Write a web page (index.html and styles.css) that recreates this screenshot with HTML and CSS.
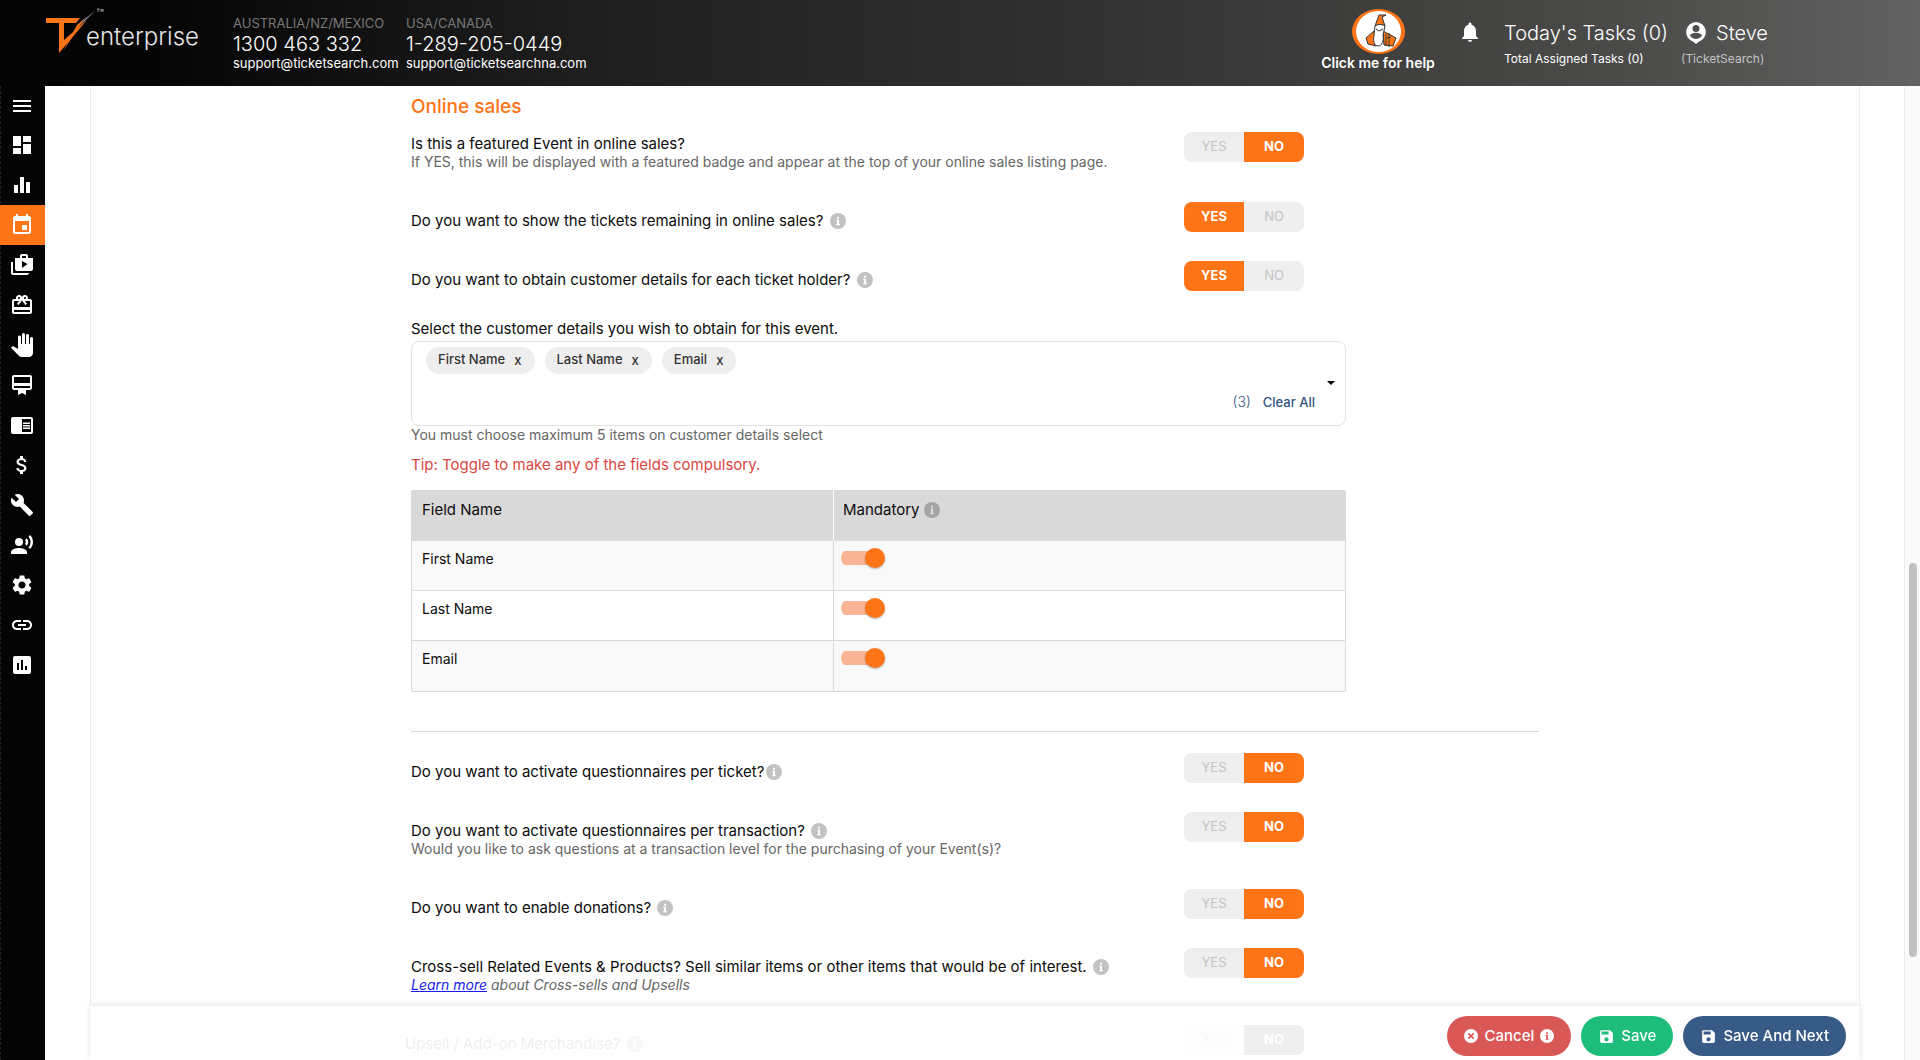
FILE: index.html
```html
<!DOCTYPE html>
<html lang="en">
<head>
<meta charset="utf-8">
<title>Event settings - Online sales</title>
<link rel="stylesheet" href="styles.css">
</head>
<body>
<svg class="sprite" aria-hidden="true">
  <symbol id="info" viewBox="0 0 24 24"><circle class="disc" cx="12" cy="12" r="12"/><path class="mark" d="M10.600 5.500h3v3h-3zM9.500 10h4v6.500h1.300v2H9.300v-2h1.300V12H9.500z"/></symbol>
  <symbol id="save" viewBox="0 0 24 24"><path d="M17 3H5a2 2 0 0 0-2 2v14a2 2 0 0 0 2 2h14a2 2 0 0 0 2-2V7l-4-4zm-5 16a3 3 0 1 1 0-6 3 3 0 0 1 0 6zm3-10H5V5h10v4z"/></symbol>
</svg>

<header class="topbar">
  <a class="logo" href="#" aria-label="enterprise home">
    <svg class="logo-mark" viewBox="0 0 58 48" aria-hidden="true">
      <path fill="#ff7417" d="M0 10h34l-4 5H18v17L41 12 13 45V15H0z"/>
      <path fill="#ff7417" d="M31 17l8-7-22 33z"/>
      <path fill="#777" d="M37 12L49 3 34 18z"/>
      <path stroke="#888" fill="none" d="M51 1h3M52 1v3M55 4V1l1 2 1-2v3"/>
    </svg>
    <span class="logo-name">enterprise</span>
  </a>
  <address class="contact">
    <span class="region">AUSTRALIA/NZ/MEXICO</span>
    <span class="phone">1300 463 332</span>
    <span class="mail">support@ticketsearch.com</span>
  </address>
  <address class="contact">
    <span class="region">USA/CANADA</span>
    <span class="phone">1-289-205-0449</span>
    <span class="mail">support@ticketsearchna.com</span>
  </address>
  <button class="help" type="button">
    <svg class="gnome" viewBox="0 0 53 45" aria-hidden="true">
      <ellipse cx="26.500" cy="22.500" rx="26.500" ry="22.500" fill="#ff7417"/>
      <ellipse cx="26.500" cy="22.500" rx="22.500" ry="20.500" fill="#fff"/>
      <path d="M22 22l-8 7 2 6 8 2zM31 22l13 7-3 8-9-1z" fill="#ff7417" stroke="#333"/>
      <path d="M23 17l4-11h7l-4 2 3 9c-3-2-6-2-10 0z" fill="#ff7417" stroke="#333"/>
      <path d="M23 17l-1 9c-1 6 0 11 4 11s6-5 5-11l2-9c-3-2-7-2-10 0zM24 20l3 2 4-2M34 25v12M37 24v14M39 28l-4 1" fill="#fff" stroke="#333"/>
    </svg>
    <span>Click me for help</span>
  </button>
  <button class="bell" type="button" aria-label="Notifications">
    <svg class="icon" viewBox="0 0 24 24"><path d="M12 22c1.100 0 2-.9 2-2h-4c0 1.100.9 2 2 2zm6-6v-5c0-3.070-1.640-5.640-4.500-6.320V4c0-.83-.67-1.500-1.500-1.500s-1.500.67-1.500 1.500v.68C7.630 5.360 6 7.920 6 11v5l-2 2v1h16v-1l-2-2z"/></svg>
  </button>
  <div class="tasks">
    <span class="big">Today's Tasks (0)</span>
    <span class="small">Total Assigned Tasks (0)</span>
  </div>
  <div class="user">
    <span class="big"><svg class="icon" viewBox="0 0 24 24" aria-hidden="true"><path fill-rule="evenodd" d="M12 1a10 10 0 0 0-3 19.500L12 23l3-2.500A10 10 0 0 0 12 1zm0 3a3.500 3.500 0 1 1 0 7 3.500 3.500 0 0 1 0-7zm0 14c-2.500 0-4.700-1.300-6-3.200 0-2 4-3.100 6-3.100s6 1.100 6 3.100c-1.300 1.900-3.500 3.200-6 3.200z"/></svg>Steve</span>
    <span class="small account">(TicketSearch)</span>
  </div>
</header>

<div class="body">
  <nav class="sidebar" aria-label="Main">
    <a href="#" aria-label="Menu"><svg class="icon" viewBox="0 0 24 24"><path d="M3 18h18v-2H3v2zm0-5h18v-2H3v2zm0-7v2h18V6H3z"/></svg></a>
    <a href="#" aria-label="Dashboard"><svg class="icon" viewBox="0 0 24 24"><path d="M3 13h8V3H3v10zm0 8h8v-6H3v6zm10 0h8V11h-8v10zm0-18v6h8V3h-8z"/></svg></a>
    <a href="#" aria-label="Statistics"><svg class="icon" viewBox="0 0 24 24"><path d="M10 20h4V4h-4v16zm-6 0h4v-8H4v8zM16 9v11h4V9h-4z"/></svg></a>
    <a href="#" class="active" aria-label="Events"><svg class="icon" viewBox="0 0 24 24"><path d="M17 12h-5v5h5v-5zM16 1v2H8V1H6v2H5c-1.110 0-1.990.9-1.990 2L3 19c0 1.100.89 2 2 2h14c1.100 0 2-.9 2-2V5c0-1.100-.9-2-2-2h-1V1h-2zm3 18H5V8h14v11z"/></svg></a>
    <a href="#" aria-label="Packages"><svg class="icon" viewBox="0 0 24 24"><path d="M3 9H1v11c0 1.110.89 2 2 2h14c1.110 0 2-.89 2-2H3V9zm15-4V3c0-1.110-.89-2-2-2h-4c-1.110 0-2 .89-2 2v2H5v11c0 1.110.89 2 2 2h14c1.110 0 2-.89 2-2V5h-5zm-6-2h4v2h-4V3zm0 12V8l5.500 3-5.500 4z"/></svg></a>
    <a href="#" aria-label="Gift cards"><svg class="icon" viewBox="0 0 24 24"><path d="M20 6h-2.180c.11-.31.18-.65.18-1 0-1.660-1.340-3-3-3-1.050 0-1.960.54-2.500 1.350l-.5.67-.5-.68C10.960 2.540 10.050 2 9 2 7.340 2 6 3.340 6 5c0 .35.07.69.18 1H4c-1.110 0-1.990.89-1.990 2L2 19c0 1.110.89 2 2 2h16c1.110 0 2-.89 2-2V8c0-1.110-.89-2-2-2zm-5-2c.55 0 1 .45 1 1s-.45 1-1 1-1-.45-1-1 .45-1 1-1zM9 4c.55 0 1 .45 1 1s-.45 1-1 1-1-.45-1-1 .45-1 1-1zm11 15H4v-2h16v2zm0-5H4V8h5.080L7 10.830 8.620 12 11 8.760l1-1.360 1 1.360L15.380 12 17 10.830 14.920 8H20v6z"/></svg></a>
    <a href="#" aria-label="Holds"><svg class="icon" viewBox="0 0 24 24"><path d="M23 5.500V20c0 2.200-1.800 4-4 4h-7.300c-1.080 0-2.100-.43-2.850-1.190L1 14.830s1.260-1.230 1.300-1.250c.22-.19.49-.29.79-.29.22 0 .42.06.6.16.04.01 4.310 2.460 4.310 2.460V4c0-.83.67-1.500 1.500-1.500S11 3.170 11 4v7h1V1.500c0-.83.67-1.500 1.500-1.500S15 .67 15 1.500V11h1V2.500c0-.83.67-1.500 1.500-1.500s1.500.67 1.500 1.500V11h1V5.500c0-.83.67-1.500 1.500-1.500s1.500.67 1.500 1.500z"/></svg></a>
    <a href="#" aria-label="Memberships"><svg class="icon" viewBox="0 0 24 24"><path d="M20 2H4c-1.110 0-2 .89-2 2v11c0 1.110.89 2 2 2h4v5l4-2 4 2v-5h4c1.110 0 2-.89 2-2V4c0-1.110-.89-2-2-2zm0 13H4v-2h16v2zm0-5H4V4h16v6z"/></svg></a>
    <a href="#" aria-label="Reader"><svg class="icon" viewBox="0 0 24 24"><path d="M13 12h7v1.500h-7zm0-2.500h7V11h-7zm0 5h7V16h-7zM21 4H3c-1.100 0-2 .9-2 2v13c0 1.100.9 2 2 2h18c1.100 0 2-.9 2-2V6c0-1.100-.9-2-2-2zm0 15h-9V6h9v13z"/></svg></a>
    <a href="#" aria-label="Finance"><svg class="icon" viewBox="0 0 24 24"><path d="M11.800 10.900c-2.270-.59-3-1.200-3-2.150 0-1.090 1.010-1.850 2.700-1.850 1.780 0 2.440.85 2.500 2.100h2.210c-.07-1.720-1.120-3.300-3.210-3.810V3h-3v2.160c-1.940.42-3.500 1.680-3.500 3.610 0 2.310 1.910 3.460 4.700 4.130 2.500.6 3 1.480 3 2.410 0 .69-.49 1.790-2.700 1.790-2.060 0-2.870-.92-2.980-2.100h-2.200c.12 2.190 1.760 3.420 3.680 3.830V21h3v-2.150c1.950-.37 3.500-1.500 3.500-3.550 0-2.840-2.430-3.810-4.700-4.400z"/></svg></a>
    <a href="#" aria-label="Tools"><svg class="icon" viewBox="0 0 24 24"><path d="M22.700 19l-9.100-9.100c.9-2.300.4-5-1.500-6.900-2-2-5-2.400-7.400-1.300L9 6 6 9 1.600 4.700C.4 7.100.9 10.100 2.900 12.100c1.900 1.900 4.600 2.400 6.900 1.500l9.100 9.100c.4.4 1 .4 1.400 0l2.300-2.300c.5-.4.5-1.100.1-1.400z"/></svg></a>
    <a href="#" aria-label="Marketing"><svg class="icon" viewBox="0 0 24 24"><circle cx="9" cy="9" r="4"/><path d="M9 15c-2.670 0-8 1.340-8 4v2h16v-2c0-2.660-5.330-4-8-4zm7.760-9.640l-1.680 1.690c.84 1.180.84 2.710 0 3.890l1.680 1.690c2.020-2.020 2.020-5.070 0-7.270zM20.070 2l-1.630 1.630c2.770 3.020 2.770 7.560 0 10.740L20.070 16c3.900-3.890 3.910-9.950 0-14z"/></svg></a>
    <a href="#" aria-label="Settings"><svg class="icon" viewBox="0 0 24 24"><path d="M19.140 12.940c.04-.3.06-.61.06-.94 0-.32-.02-.64-.07-.94l2.030-1.580c.18-.14.23-.41.12-.61l-1.920-3.320c-.12-.22-.37-.29-.59-.22l-2.390.96c-.5-.38-1.030-.7-1.620-.94l-.36-2.540c-.04-.24-.24-.41-.48-.41h-3.840c-.24 0-.43.17-.47.41l-.36 2.540c-.59.24-1.130.57-1.620.94l-2.390-.96c-.22-.08-.47 0-.59.22L2.740 8.870c-.12.21-.08.47.12.61l2.030 1.580c-.05.3-.09.63-.09.94s.02.64.07.94l-2.030 1.580c-.18.14-.23.41-.12.61l1.920 3.320c.12.22.37.29.59.22l2.390-.96c.5.38 1.030.7 1.620.94l.36 2.540c.05.24.24.41.48.41h3.840c.24 0 .44-.17.47-.41l.36-2.540c.59-.24 1.130-.56 1.620-.94l2.390.96c.22.08.47 0 .59-.22l1.920-3.320c.12-.22.07-.47-.12-.61l-2.010-1.580zM12 15.600c-1.980 0-3.600-1.620-3.600-3.600s1.620-3.600 3.600-3.600 3.600 1.620 3.600 3.600-1.620 3.600-3.600 3.600z"/></svg></a>
    <a href="#" aria-label="Links"><svg class="icon" viewBox="0 0 24 24"><path d="M3.900 12c0-1.710 1.390-3.100 3.100-3.100h4V7H7c-2.760 0-5 2.240-5 5s2.240 5 5 5h4v-1.900H7c-1.710 0-3.100-1.390-3.100-3.100zM8 13h8v-2H8v2zm9-6h-4v1.900h4c1.710 0 3.100 1.390 3.100 3.100s-1.390 3.100-3.100 3.100h-4V17h4c2.760 0 5-2.240 5-5s-2.240-5-5-5z"/></svg></a>
    <a href="#" aria-label="Reports"><svg class="icon" viewBox="0 0 24 24"><path d="M19 3H5c-1.100 0-2 .9-2 2v14c0 1.100.9 2 2 2h14c1.100 0 2-.9 2-2V5c0-1.100-.9-2-2-2zM9 17H7v-7h2v7zm4 0h-2V7h2v10zm4 0h-2v-4h2v4z"/></svg></a>
  </nav>

  <main class="page">
    <form class="panel">
      <h2>Online sales</h2>

      <div class="field compact">
        <div class="text">
          <p class="question" id="q1">Is this a featured Event in online sales?</p>
          <p class="hint">If YES, this will be displayed with a featured badge and appear at the top of your online sales listing page.</p>
        </div>
        <div class="switch" role="radiogroup" aria-labelledby="q1">
          <label><input type="radio" name="featured"><span>YES</span></label>
          <label><input type="radio" name="featured" checked><span>NO</span></label>
        </div>
      </div>

      <div class="field">
        <div class="text">
          <p class="question" id="q2">Do you want to show the tickets remaining in online sales? <svg class="info"><use href="#info"/></svg></p>
        </div>
        <div class="switch" role="radiogroup" aria-labelledby="q2">
          <label><input type="radio" name="remaining" checked><span>YES</span></label>
          <label><input type="radio" name="remaining"><span>NO</span></label>
        </div>
      </div>

      <div class="field">
        <div class="text">
          <p class="question" id="q3">Do you want to obtain customer details for each ticket holder? <svg class="info"><use href="#info"/></svg></p>
        </div>
        <div class="switch" role="radiogroup" aria-labelledby="q3">
          <label><input type="radio" name="details" checked><span>YES</span></label>
          <label><input type="radio" name="details"><span>NO</span></label>
        </div>
      </div>

      <section class="details">
        <p class="question" id="pick">Select the customer details you wish to obtain for this event.</p>
        <div class="multiselect" role="group" aria-labelledby="pick">
          <div class="chips">
            <span class="chip">First Name <button type="button" aria-label="Remove First Name">x</button></span>
            <span class="chip">Last Name <button type="button" aria-label="Remove Last Name">x</button></span>
            <span class="chip">Email <button type="button" aria-label="Remove Email">x</button></span>
          </div>
          <div class="summary"><span class="count">(3)</span><button class="clear" type="button">Clear All</button></div>
          <button class="caret" type="button" aria-label="Open list"></button>
        </div>
        <p class="hint">You must choose maximum 5 items on customer details select</p>
        <p class="tip">Tip: Toggle to make any of the fields compulsory.</p>

        <table class="fields">
          <thead>
            <tr><th scope="col" class="name">Field Name</th><th scope="col">Mandatory <svg class="info"><use href="#info"/></svg></th></tr>
          </thead>
          <tbody>
            <tr><td><label for="m1">First Name</label></td><td><input class="slide" id="m1" type="checkbox" checked></td></tr>
            <tr><td><label for="m2">Last Name</label></td><td><input class="slide" id="m2" type="checkbox" checked></td></tr>
            <tr><td><label for="m3">Email</label></td><td><input class="slide" id="m3" type="checkbox" checked></td></tr>
          </tbody>
        </table>
      </section>

      <hr>

      <div class="field">
        <div class="text">
          <p class="question" id="q4">Do you want to activate questionnaires per ticket?<svg class="info"><use href="#info"/></svg></p>
        </div>
        <div class="switch" role="radiogroup" aria-labelledby="q4">
          <label><input type="radio" name="perticket"><span>YES</span></label>
          <label><input type="radio" name="perticket" checked><span>NO</span></label>
        </div>
      </div>

      <div class="field">
        <div class="text">
          <p class="question" id="q5">Do you want to activate questionnaires per transaction? <svg class="info"><use href="#info"/></svg></p>
          <p class="hint">Would you like to ask questions at a transaction level for the purchasing of your Event(s)?</p>
        </div>
        <div class="switch" role="radiogroup" aria-labelledby="q5">
          <label><input type="radio" name="pertransaction"><span>YES</span></label>
          <label><input type="radio" name="pertransaction" checked><span>NO</span></label>
        </div>
      </div>

      <div class="field">
        <div class="text">
          <p class="question" id="q6">Do you want to enable donations? <svg class="info"><use href="#info"/></svg></p>
        </div>
        <div class="switch" role="radiogroup" aria-labelledby="q6">
          <label><input type="radio" name="donations"><span>YES</span></label>
          <label><input type="radio" name="donations" checked><span>NO</span></label>
        </div>
      </div>

      <div class="field">
        <div class="text">
          <p class="question" id="q7">Cross-sell Related Events &amp; Products? Sell similar items or other items that would be of interest. <svg class="info"><use href="#info"/></svg></p>
          <p class="hint more"><a href="#">Learn more</a> about Cross-sells and Upsells</p>
        </div>
        <div class="switch" role="radiogroup" aria-labelledby="q7">
          <label><input type="radio" name="crosssell"><span>YES</span></label>
          <label><input type="radio" name="crosssell" checked><span>NO</span></label>
        </div>
      </div>

      <div class="field muted">
        <div class="text">
          <p class="question" id="q8">Upsell / Add-on Merchandise? <svg class="info"><use href="#info"/></svg></p>
        </div>
        <div class="switch" role="radiogroup" aria-labelledby="q8">
          <label><input type="radio" name="upsell"><span>YES</span></label>
          <label><input type="radio" name="upsell" checked><span>NO</span></label>
        </div>
      </div>
    </form>

    <footer class="actions">
      <button class="btn cancel" type="button">
        <svg viewBox="0 0 24 24" aria-hidden="true"><path fill-rule="evenodd" d="M12 0a12 12 0 1 0 0 24 12 12 0 0 0 0-24zm5.500 15.500l-2 2L12 14l-3.500 3.500-2-2L10 12 6.500 8.500l2-2L12 10l3.500-3.500 2 2L14 12z"/></svg>
        Cancel
        <svg class="info"><use href="#info"/></svg>
      </button>
      <button class="btn save" type="submit"><svg class="disk" aria-hidden="true"><use href="#save"/></svg>Save</button>
      <button class="btn next" type="submit"><svg class="disk" aria-hidden="true"><use href="#save"/></svg>Save And Next</button>
    </footer>
  </main>

  <div class="scroller" aria-hidden="true"><div class="thumb"></div></div>
</div>
</body>
</html>
```

FILE: styles.css
```css
:root {
  --orange: #ff7417;
  --header: 86px;
}

* { box-sizing: border-box; }

body {
  margin: 0;
  height: 100vh;
  display: grid;
  grid-template-rows: var(--header) minmax(0, 1fr);
  overflow: hidden;
  background: #fff;
  color: #0c0c0c;
  font-family: Inter, "Liberation Sans", sans-serif;
  font-size: 15px;
  line-height: 18px;
}

p, h2 { margin: 0; }

button {
  border: 0;
  padding: 0;
  background: none;
  color: inherit;
  font: inherit;
  cursor: pointer;
}

.sprite { position: absolute; width: 0; height: 0; }
.icon { width: 24px; height: 24px; fill: #fff; display: block; }

/* Header */
.topbar {
  display: flex;
  align-items: flex-start;
  background: linear-gradient(90deg, #040404 0, #050505 8%, #1f1f1f 31%, #303030 55%, #4b4b49 85%, #626262 100%);
  color: #fff;
  white-space: nowrap;
}

.logo {
  display: flex;
  width: 187px;
  margin-left: 46px;
  padding-top: 8px;
  color: #e4e4e4;
  text-decoration: none;
}
.logo-mark { width: 58px; height: 48px; flex: none; margin-right: -18px; }
.logo-name { padding-top: 14px; font-size: 24px; line-height: 30px; font-weight: 300; }

.contact {
  display: flex;
  flex-direction: column;
  width: 173px;
  padding-top: 14px;
  font-style: normal;
}
.region { color: #777; font-size: 13px; line-height: 18px; }
.phone { font-size: 20px; line-height: 24px; font-weight: 300; }
.mail { font-size: 13px; line-height: 15px; }

.help {
  display: flex;
  flex-direction: column;
  align-items: center;
  width: 122px;
  margin: 9px 19px 0 auto;
  font-size: 14px;
  font-weight: 600;
}
.gnome { width: 53px; height: 45px; }

.bell { margin: 20px 22px 0 0; }
.tasks, .user { display: flex; flex-direction: column; padding-top: 19px; }
.tasks { width: 177px; }
.user { width: 239px; }
.big { display: flex; align-items: center; gap: 8px; font-size: 20px; line-height: 28px; font-weight: 300; }
.user .big { padding-left: 3px; }
.small { padding-top: 3px; font-size: 12px; line-height: 18px; }
.account { color: #c4c4c4; }

/* Shell */
.body {
  display: grid;
  grid-template-columns: 45px minmax(0, 1fr) 16px;
  min-height: 0;
}

.sidebar { background: #040404; border-left: 1px dashed #222; }
.sidebar a { display: flex; align-items: center; height: 40px; padding-left: 9px; }
.sidebar a:first-child { height: 39px; }
.sidebar .active { margin-left: -1px; padding-left: 10px; background: var(--orange); }

.page { position: relative; padding: 0 44px 0 45px; overflow: hidden; }
.panel {
  padding: 10px 320px 0;
  border: solid #ececec;
  border-width: 0 1px;
}

.scroller { background: #fafafa; border-left: 1px solid #ececec; padding: 0 3px 0 4px; display: flex; flex-direction: column; }
.scroller::before { content: ""; flex: 477; }
.scroller::after { content: ""; flex: 103; }
.thumb { flex: 394; border-radius: 4px; background: #c1c1c1; }

/* Form rows */
h2 {
  margin-bottom: 14px;
  color: var(--orange);
  font-size: 19px;
  line-height: 22px;
  font-weight: 500;
}

.field { display: grid; grid-template-columns: minmax(0, 1fr) 355px; align-items: start; white-space: nowrap; }
.text { padding: 10px 0 31px; }
.compact .text { padding-top: 3px; }
.hint { color: #666; font-size: 14px; }
.more { font-style: italic; }
.more a { color: #1a1aee; }

.info { width: 16px; height: 16px; vertical-align: -3px; }
.question .info { margin-left: 2px; }
.disc { fill: var(--disc, #c2c2c2); }
.mark { fill: var(--mark, #fff); }

.switch { display: flex; width: 120px; height: 30px; border-radius: 8px; overflow: hidden; background: #efefef; }
.switch label { position: relative; flex: 1; }
.switch input { position: absolute; inset: 0; margin: 0; appearance: none; }
.switch span {
  position: relative;
  display: block;
  height: 30px;
  color: #c4c4c4;
  font-size: 13px;
  line-height: 28px;
  text-align: center;
}
.switch input:checked + span { background: var(--orange); color: #fff; font-weight: 700; }

.muted { margin-left: -6px; color: #888; filter: grayscale(1); }

/* Customer details */
.details { padding-right: 193px; }
.multiselect {
  position: relative;
  height: 85px;
  margin-top: 3px;
  padding: 5px 30px 0 14px;
  border: 1px solid #e2e2e2;
  border-radius: 8px;
}
.chips { display: flex; gap: 10px; }
.chip {
  display: flex;
  gap: 9px;
  height: 27px;
  padding: 0 13px 0 12px;
  border-radius: 14px;
  background: #eee;
  color: #333;
  font-size: 13px;
  line-height: 25px;
  font-weight: 500;
}
.summary { display: flex; justify-content: flex-end; gap: 12px; padding-top: 19px; color: #335580; }
.count { font-size: 14px; font-weight: 300; }
.clear { font-size: 13px; font-weight: 500; }
.caret {
  position: absolute;
  top: 39px;
  right: 10px;
  border: solid transparent;
  border-width: 4px 4px 0;
  border-top-color: #000;
}
.tip { margin: 12px 0 16px; color: #d9473f; }

.fields {
  width: 100%;
  table-layout: fixed;
  border-collapse: separate;
  border-spacing: 0;
  border: 1px solid #d9d9d9;
  border-top: 0;
  border-radius: 2px;
}
.fields th, .fields td { padding: 10px 10px 0; text-align: left; vertical-align: top; font-weight: 400; }
.fields th { height: 51px; padding-top: 11px; background: #d9d9d9; }
.fields th + th { border-left: 1px solid #fff; padding-left: 9px; --disc: #a3a5a7; --mark: #ddd; }
.fields .name { width: 421px; }
.fields td { height: 50px; padding-top: 9px; border-bottom: 1px solid #d9d9d9; font-size: 14px; }
.fields tr:last-child td { border-bottom: 0; }
.fields td + td { border-left: 1px solid #d9d9d9; padding: 7px 7px 0; }
.fields tbody tr:nth-child(odd) { background: #f9f9f9; }

.slide {
  display: flex;
  align-items: center;
  justify-content: flex-end;
  appearance: none;
  width: 44px;
  height: 20px;
  margin: 0;
  background: linear-gradient(#fbb495, #fbb495) 0 3px / 34px 14px no-repeat;
  border-radius: 10px;
}
.slide::after {
  content: "";
  width: 20px;
  height: 20px;
  border-radius: 50%;
  background: var(--orange);
  box-shadow: 0 1px 2px rgba(0, 0, 0, .3);
}
.slide:not(:checked)::after { margin-right: auto; }

hr { margin: 39px 0 21px; border: 0; border-top: 1px solid #dcdcdc; }

/* Footer bar lies over the scrolling form */
.actions {
  position: absolute;
  left: 45px;
  right: 44px;
  bottom: 0;
  display: flex;
  justify-content: flex-end;
  gap: 10px;
  padding: 10px 14px 4px;
  background: rgba(255, 255, 255, .86);
  box-shadow: 0 -1px 6px rgba(0, 0, 0, .12);
}
.btn {
  display: flex;
  align-items: center;
  gap: 6px;
  height: 40px;
  padding: 0 17px;
  border-radius: 20px;
  color: #fff;
  font-weight: 500;
}
.btn svg { width: 14px; height: 14px; fill: #fff; }
.btn .disk { width: 17px; height: 17px; }
.cancel { background: #d95754; --disc: #fff; --mark: #d95754; }
.save { background: #1fbd7c; }
.next { background: #385a86; }
```
